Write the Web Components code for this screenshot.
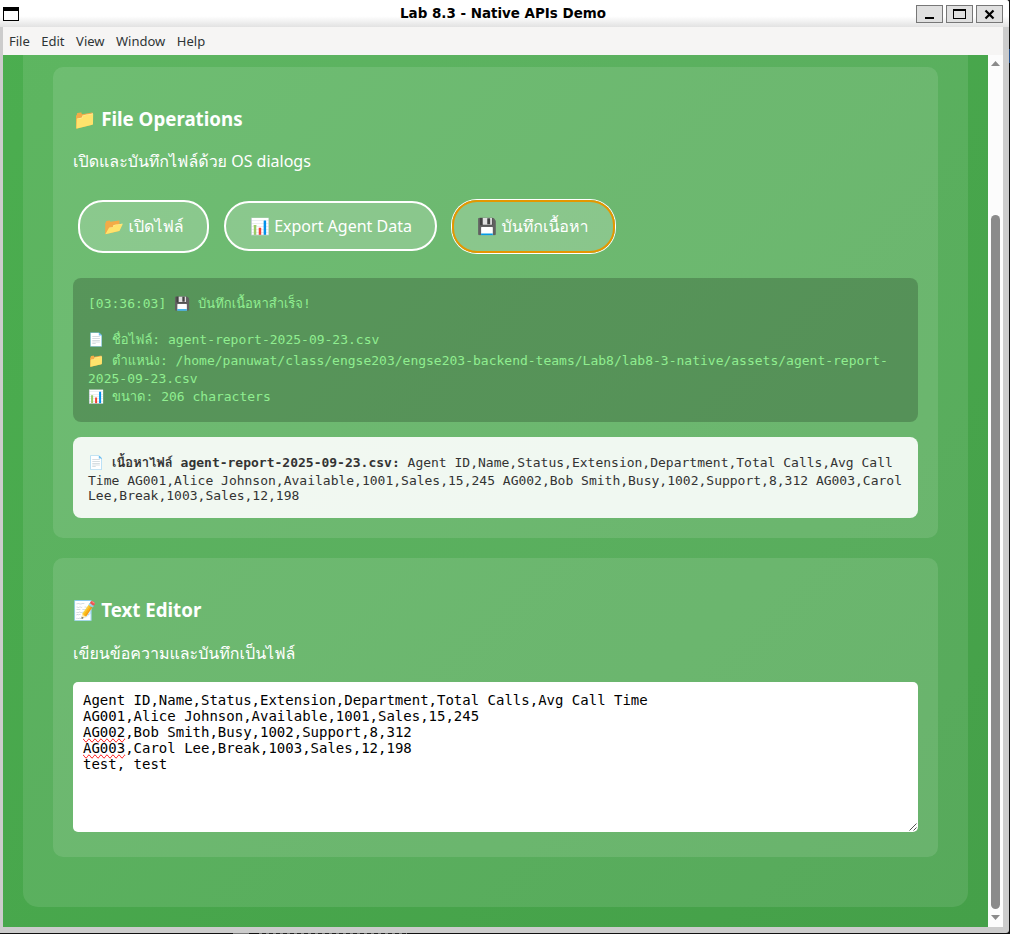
<!DOCTYPE html>
<html lang="th">
<head>
<meta charset="utf-8">
<title>Lab 8.3 - Native APIs Demo</title>
<style>
html,body{margin:0;height:100%;overflow:hidden;background:#111}
body{font-family:"Noto Sans",Loma,"Noto Color Emoji",sans-serif;background:linear-gradient(#777,#777) 233px 933px/16px 1px no-repeat,repeating-linear-gradient(90deg,#777 0 3px,#222 3px 7px) 259px 933px/148px 1px no-repeat,linear-gradient(#24508a,#24508a) 1009px 49px/1px 14px no-repeat,#111}
</style>
</head>
<body>
<app-window>
  <title-bar slot="title">Lab 8.3 - Native APIs Demo</title-bar>
  <menu-bar slot="menu"><span>File</span><span>Edit</span><span>View</span><span>Window</span><span>Help</span></menu-bar>
  <demo-page>
    <demo-section style="height:471px">
      <span slot="heading">📁 File Operations</span>
      <span slot="lead">เปิดและบันทึกไฟล์ด้วย OS dialogs</span>
      <button-row>
        <pill-button style="width:131px;height:53px;padding-left:1px">📂 เปิดไฟล์</pill-button>
        <pill-button style="width:213px;height:50px;padding-left:1px">📊 Export Agent Data</pill-button>
        <pill-button focused style="width:163px;height:53px;padding-right:1px">💾 บันทึกเนื้อหา</pill-button>
      </button-row>
      <log-output></log-output>
      <file-preview></file-preview>
    </demo-section>
    <demo-section style="height:299px;--lead-top:19px;--editor-top:18px">
      <span slot="heading">📝 Text Editor</span>
      <span slot="lead">เขียนข้อความและบันทึกเป็นไฟล์</span>
      <text-editor></text-editor>
    </demo-section>
  </demo-page>
  <scroll-bar slot="scroll"></scroll-bar>
</app-window>
<script>
const define = (name, html) => customElements.define(name, class extends HTMLElement {
  constructor(){ super(); this.attachShadow({mode:'open'}).innerHTML = html; }
});

define('app-window', `<style>
:host{display:grid;grid-template-rows:27px 28px 872px 6px;width:1009px;height:933px;background:#ccc;overflow:hidden;border-radius:0 3px 3px 0}
.menu{margin:0 6px 0 3px}
.view{display:flex;margin:0 6px 0 3px;overflow:hidden}
</style><slot name="title"></slot><div class="menu"><slot name="menu"></slot></div>
<div class="view"><slot></slot><slot name="scroll"></slot></div>`);

define('title-bar', `<style>
:host{display:grid;grid-template-columns:100px 1fr 100px;height:27px;background:linear-gradient(#fff 0,#fff 60%,#e2e2e2 100%);align-items:center}
.icon{margin:1px 0 0 3px;display:block}
.t{text-align:center;font:bold 13.45px/27px "DejaVu Sans",sans-serif;color:#000;white-space:nowrap;position:relative;left:-1.5px}
.c{display:flex;gap:3px;justify-content:flex-end;padding-right:6px;margin-top:1px}
svg{display:block}
</style>
<svg class="icon" width="16" height="14" shape-rendering="crispEdges"><rect width="16" height="14"/><rect x="1" y="4" width="14" height="9" fill="#fff"/></svg>
<div class="t"><slot></slot></div>
<div class="c">
<svg width="27" height="18"><rect x=".5" y=".5" width="26" height="17" fill="#e0e0e0" stroke="#777"/><rect x="9" y="12" width="9" height="2"/></svg>
<svg width="27" height="18"><rect x=".5" y=".5" width="26" height="17" fill="#e0e0e0" stroke="#777"/><path d="M7 4h13v10H7zM8 6v7h11V6z" fill-rule="evenodd"/></svg>
<svg width="27" height="18"><rect x=".5" y=".5" width="26" height="17" fill="#e0e0e0" stroke="#777"/><path d="M9.500 5.500l8 8M17.500 5.500l-8 8" stroke="#000" stroke-width="2.200"/></svg>
</div>`);

define('menu-bar', `<style>
:host{display:flex;gap:11.5px;height:28px;padding-left:6px;background:#f6f5f4;color:#2e3436;font:13px/28px "Noto Sans",sans-serif}
</style><slot></slot>`);

define('demo-page', `<style>
:host{display:block;box-sizing:border-box;width:985px;height:872px;padding:0 20px 20px;background:linear-gradient(135deg,#4caf50,#45a049) bottom/985px 1056px no-repeat}
.box{box-sizing:border-box;height:852px;padding:12px 30px 0;display:flex;flex-direction:column;gap:20px;background:rgba(255,255,255,.1);border-radius:0 0 15px 15px}
</style><div class="box"><slot></slot></div>`);

define('demo-section', `<style>
:host{display:block;box-sizing:border-box;padding:20px;background:rgba(255,255,255,.11);border-radius:10px;color:#fff}
h3{margin:18.7px 0 0;font-size:18.72px;line-height:26px;height:26px;font-weight:700;white-space:nowrap}
p{margin:var(--lead-top,18px) 0 0;font-size:16px;line-height:22px;height:22px;white-space:nowrap}
</style><h3><slot name="heading"></slot></h3><p><slot name="lead"></slot></p><slot></slot>`);

define('button-row', `<style>
:host{display:flex;gap:15px;align-items:center;margin:28px 0 0 5px;height:53px}
</style><slot></slot>`);

define('pill-button', `<style>
:host{display:flex;box-sizing:border-box;align-items:center;justify-content:center;border:2px solid #fff;border-radius:25px;background:rgba(255,255,255,.2);color:#fff;font-size:16px;line-height:22px;white-space:nowrap}
:host([focused]){border-color:#e59700;box-shadow:0 0 0 1px #fff}
</style><slot></slot>`);

define('log-output', `<style>
:host{display:block;box-sizing:border-box;height:144px;margin-top:25px;padding:17px 15px 15px;background:rgba(0,0,0,.2);border-radius:8px;color:#90ee90;font:13px/18px "DejaVu Sans Mono",Loma,"Noto Color Emoji",monospace}
div{height:18px;white-space:nowrap}
.gap{height:18px}.tall{height:21px;line-height:24px}
</style><div>[03:36:03] 💾 บันทึกเนื้อหาสำเร็จ!</div><div class="gap"></div>
<div>📄 ชื่อไฟล์: agent-report-2025-09-23.csv</div>
<div class="tall">📁 ตำแหน่ง: /home/panuwat/class/engse203/engse203-backend-teams/Lab8/lab8-3-native/assets/agent-report-</div>
<div>2025-09-23.csv</div><div>📊 ขนาด: 206 characters</div>`);

define('file-preview', `<style>
:host{display:block;box-sizing:border-box;height:81px;margin-top:15px;padding:17px 15px 0;background:rgba(255,255,255,.9);border-radius:8px;color:#333;font:13px/18px "DejaVu Sans Mono",Loma,"Noto Color Emoji",monospace}
div{height:18px;white-space:nowrap}
.last{height:15px;line-height:11px}
</style><div><b>📄 เนื้อหาไฟล์ agent-report-2025-09-23.csv:</b> Agent ID,Name,Status,Extension,Department,Total Calls,Avg Call</div>
<div>Time AG001,Alice Johnson,Available,1001,Sales,15,245 AG002,Bob Smith,Busy,1002,Support,8,312 AG003,Carol</div>
<div class="last">Lee,Break,1003,Sales,12,198</div>`);

define('text-editor', `<style>
:host{display:block;position:relative;box-sizing:border-box;height:150px;margin-top:var(--editor-top,19px);padding:10px;background:#fff;border-radius:5px;color:#000;font:14px/16px "DejaVu Sans Mono",monospace}
div{height:16px;white-space:pre}
i{font-style:normal;text-decoration-line:spelling-error}
svg{position:absolute;right:1px;bottom:1px}
</style><div>Agent ID,Name,Status,Extension,Department,Total Calls,Avg Call Time</div>
<div>AG001,Alice Johnson,Available,1001,Sales,15,245</div>
<div><i>AG002</i>,Bob Smith,Busy,1002,Support,8,312</div>
<div><i>AG003</i>,Carol Lee,Break,1003,Sales,12,198</div>
<div>test, test</div>
<svg width="8" height="8"><path d="M.5 7.500l7-7M4.500 7.500l3-3" stroke="#555" fill="none"/></svg>`);

define('scroll-bar', `<style>
:host{display:flex;flex-direction:column;align-items:center;width:15px;height:872px;background:#fcfcfc}
.thumb{width:9px;height:694px;border-radius:5px;background:#8b8b8b;margin-top:149px}
svg{display:block;margin-top:6px}
</style><svg width="9" height="5"><path d="M0 5l4.500-5L9 5z" fill="#8b8b8b"/></svg><div class="thumb"></div><svg width="9" height="5"><path d="M0 0l4.500 5L9 0z" fill="#8b8b8b"/></svg>`);
</script>
</body>
</html>
